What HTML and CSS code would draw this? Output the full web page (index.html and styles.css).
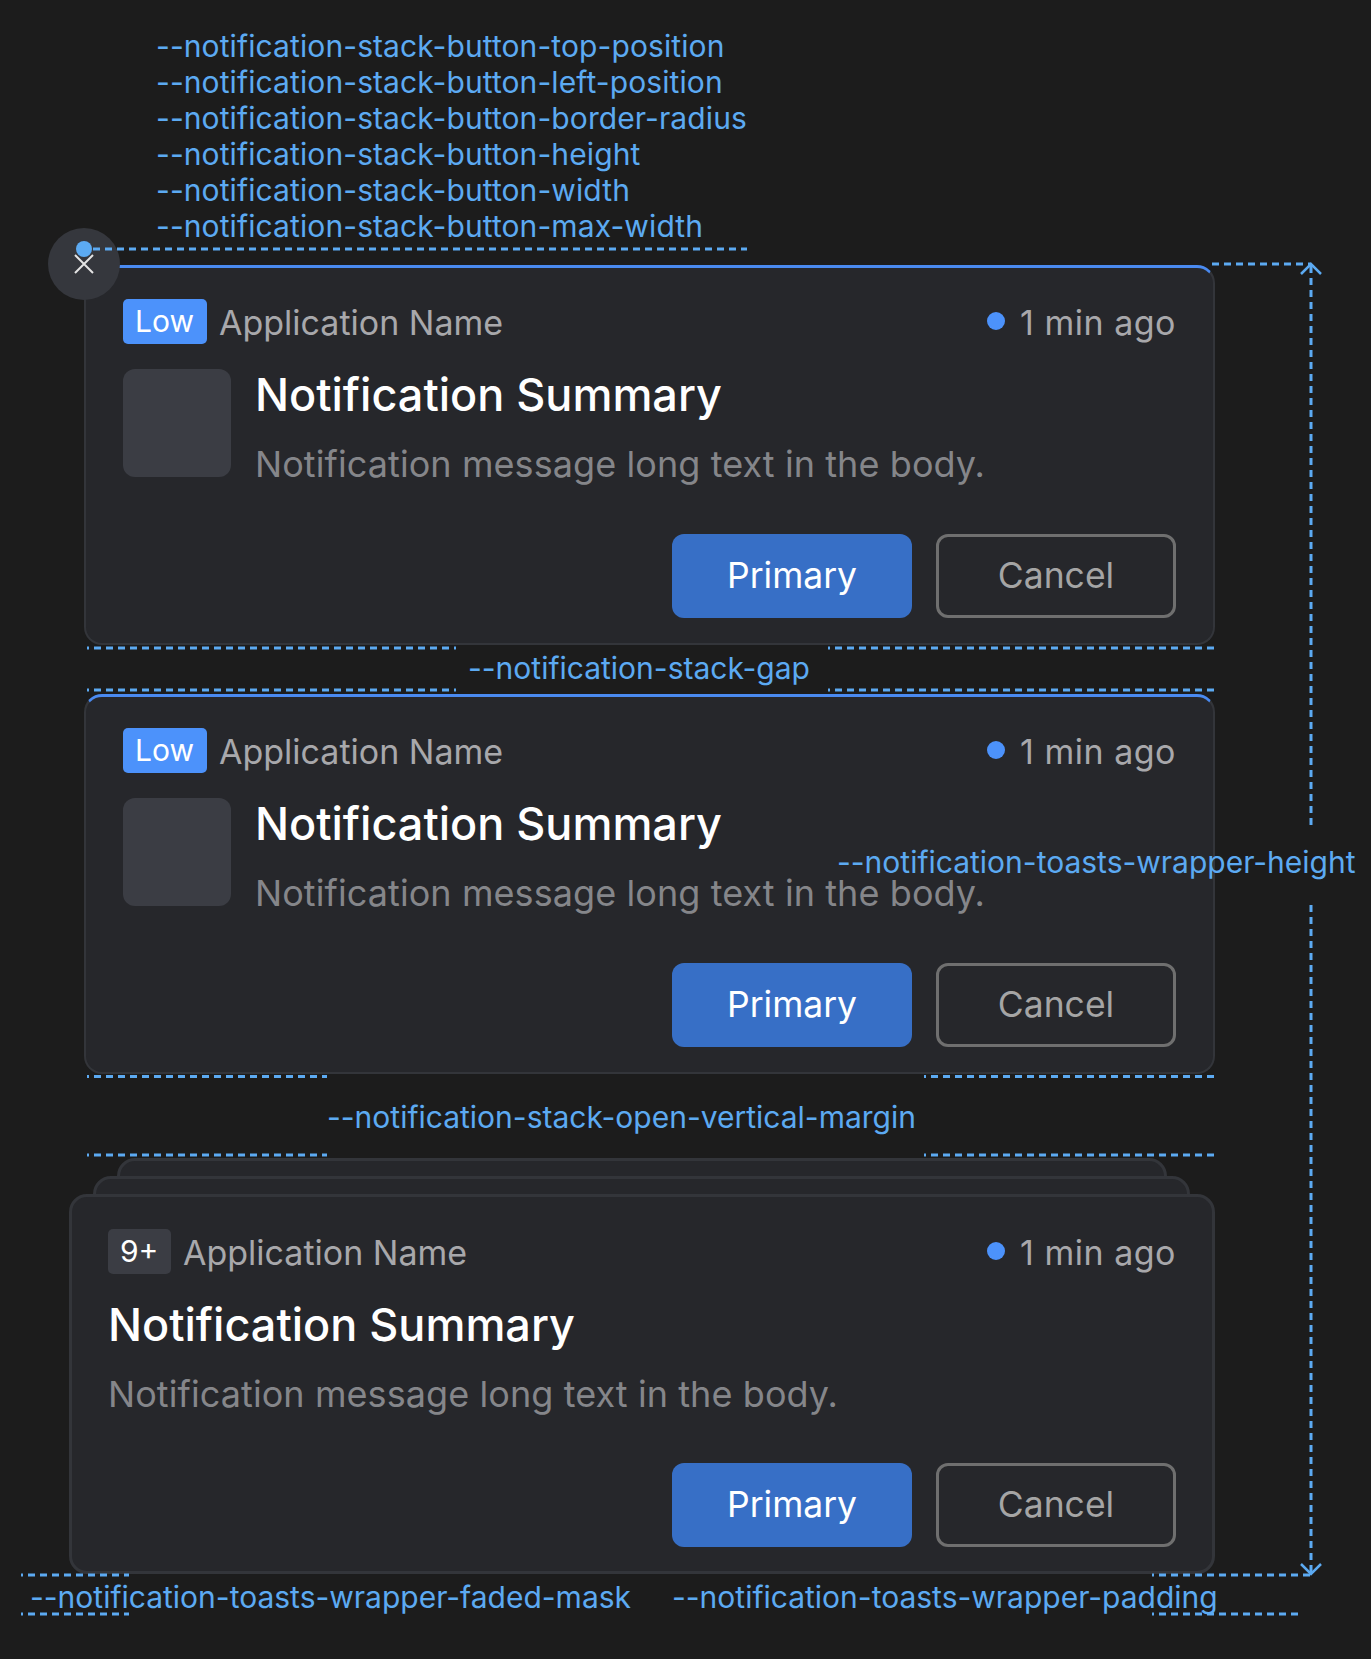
FILE: index.html
```html
<!DOCTYPE html>
<html>
<head>
    <title>Notification stack tokens</title>
    <link rel="stylesheet" href="styles.css">
</head>
<body>
    <div class="canvas">
        <!-- Tokens of the close button -->
        <div class="var-list">
            <div>--notification-stack-button-top-position</div>
            <div>--notification-stack-button-left-position</div>
            <div>--notification-stack-button-border-radius</div>
            <div>--notification-stack-button-height</div>
            <div>--notification-stack-button-width</div>
            <div>--notification-stack-button-max-width</div>
        </div>

        <div class="toasts">
            <!-- Toast 1 -->
            <div class="toast toast-unread">
                <div class="toast-header">
                    <span class="badge badge-low">Low</span>
                    <span class="app-name">Application Name</span>
                    <span class="unread-dot"></span>
                    <span class="time">1 min ago</span>
                </div>
                <div class="toast-body">
                    <div class="toast-icon"></div>
                    <div>
                        <div class="toast-title">Notification Summary</div>
                        <div class="toast-message">Notification message long text in the body.</div>
                    </div>
                </div>
                <div class="toast-actions">
                    <button class="btn btn-primary">Primary</button>
                    <button class="btn btn-cancel">Cancel</button>
                </div>
            </div>

            <!-- Toast 2 -->
            <div class="toast toast-unread">
                <div class="toast-header">
                    <span class="badge badge-low">Low</span>
                    <span class="app-name">Application Name</span>
                    <span class="unread-dot"></span>
                    <span class="time">1 min ago</span>
                </div>
                <div class="toast-body">
                    <div class="toast-icon"></div>
                    <div>
                        <div class="toast-title">Notification Summary</div>
                        <div class="toast-message">Notification message long text in the body.</div>
                    </div>
                </div>
                <div class="toast-actions">
                    <button class="btn btn-primary">Primary</button>
                    <button class="btn btn-cancel">Cancel</button>
                </div>
            </div>

            <!-- Collapsed stack -->
            <div class="stack">
                <div class="stack-layer stack-layer-back"></div>
                <div class="stack-layer stack-layer-mid"></div>
                <div class="toast toast-front">
                    <div class="toast-header">
                        <span class="badge badge-count">9+</span>
                        <span class="app-name">Application Name</span>
                        <span class="unread-dot"></span>
                        <span class="time">1 min ago</span>
                    </div>
                    <div class="toast-body">
                        <div>
                            <div class="toast-title">Notification Summary</div>
                            <div class="toast-message">Notification message long text in the body.</div>
                        </div>
                    </div>
                    <div class="toast-actions">
                        <button class="btn btn-primary">Primary</button>
                        <button class="btn btn-cancel">Cancel</button>
                    </div>
                </div>
            </div>
        </div>

        <!-- Close button -->
        <div class="close-button">
            <svg width="22" height="22" viewBox="0 0 22 22">
                <path d="M2 2 L20 20 M20 2 L2 20" stroke="#e4e4e4" stroke-width="2" fill="none"/>
            </svg>
        </div>

        <!-- Measure lines -->
        <svg class="measures" width="1371" height="1659" viewBox="0 0 1371 1659">
            <circle cx="84" cy="249" r="8" class="measure-dot"/>
            <path class="measure-line" d="M93 249 H747"/>
            <path class="measure-line measure-offset" d="M87 648 H456 M828 648 H1215 M87 690 H456 M828 690 H1215"/>
            <path class="measure-line measure-offset" d="M87 1076.5 H327 M924 1076.5 H1215 M87 1155 H327 M924 1155 H1215"/>
            <path class="measure-line" d="M1212 264 H1311 M1311 266 V825 M1311 905 V1572"/>
            <path class="measure-solid" d="M1301 274 L1311 264 L1321 274 M1301 1564 L1311 1574 L1321 1564"/>
            <path class="measure-line measure-offset" d="M21 1575 H129 M21 1614 H129 M1152 1575 H1311 M1152 1614 H1299"/>
        </svg>

        <div class="label label-gap">--notification-stack-gap</div>
        <div class="label label-margin">--notification-stack-open-vertical-margin</div>
        <div class="label label-height">--notification-toasts-wrapper-height</div>
        <div class="label label-mask">--notification-toasts-wrapper-faded-mask</div>
        <div class="label label-padding">--notification-toasts-wrapper-padding</div>
    </div>
</body>
</html>
```

FILE: styles.css
```css
body {
    margin: 0;
    background-color: #1c1c1c;
    font-family: Inter, "Liberation Sans", sans-serif;
}
.canvas {
    position: relative;
    height: 1659px;
    overflow: hidden;
}
.var-list {
    height: 237px;
    padding: 28px 0 0 156px;
    font-size: 30px;
    line-height: 36px;
    letter-spacing: 0.1px;
    color: #5caaf2;
}
.var-list div {
    height: 36px;
}
.toasts {
    display: flex;
    flex-direction: column;
    gap: 49px;
    width: 1131px;
    margin-left: 84px;
}
.toast {
    position: relative;
    box-sizing: border-box;
    height: 380px;
    padding: 31px 37px 24px 37px;
    background-color: #26272b;
    border: 2px solid #33353a;
    border-radius: 18px;
    display: flex;
    flex-direction: column;
}
.toast-unread {
    border-top: 3px solid #4a8af0;
}
.toast-header {
    display: flex;
    align-items: center;
    height: 45px;
}
.badge {
    height: 45px;
    line-height: 45px;
    padding: 0 12px;
    border-radius: 5px;
    font-size: 30px;
    color: #fff;
    box-sizing: border-box;
}
.badge-low {
    background-color: #4c92fb;
    width: 84px;
}
.badge-count {
    background-color: #3b3d44;
    width: 63px;
}
.app-name {
    margin: 2px 0 0 12px;
    flex: 1;
    font-size: 34px;
    color: #a8a8ab;
}
.unread-dot {
    width: 18px;
    height: 18px;
    border-radius: 50%;
    background-color: #4c92fb;
    margin: -2px 15px 0 0;
}
.time {
    margin-top: 2px;
    font-size: 34px;
    letter-spacing: 0.5px;
    color: #a8a8ab;
}
.toast-body {
    display: flex;
    gap: 24px;
    height: 165px;
    margin-top: 25px;
}
.toast-icon {
    width: 108px;
    height: 108px;
    border-radius: 12px;
    background-color: #3b3d44;
}
.toast-title {
    font-size: 45px;
    font-weight: 500;
    line-height: 52px;
    color: #fff;
}
.toast-message {
    margin-top: 20px;
    font-size: 36px;
    letter-spacing: 0.08px;
    line-height: 46px;
    color: #85868a;
}
.toast-actions {
    display: flex;
    justify-content: flex-end;
    gap: 24px;
}
.btn {
    width: 240px;
    height: 84px;
    padding-bottom: 2px;
    border-radius: 12px;
    font-family: inherit;
    font-size: 35.5px;
    box-sizing: border-box;
}
.btn-primary {
    background-color: #376fc6;
    border: none;
    color: #fff;
}
.btn-cancel {
    background: none;
    border: 3px solid #6f6f6f;
    color: #a5a5a5;
}
.stack {
    position: relative;
    margin-top: 71px;
}
.stack-layer {
    position: absolute;
    box-sizing: border-box;
    height: 60px;
    background-color: #26272b;
    border: 3px solid #33353a;
    border-radius: 18px 18px 0 0;
}
.stack-layer-back {
    top: -36px;
    left: 33px;
    right: 48px;
}
.stack-layer-mid {
    top: -18px;
    left: 9px;
    right: 25px;
}
.toast-front {
    height: 380px;
    margin-left: -15px;
    padding: 32px 36px 24px 36px;
    border-width: 3px;
}
.toast-front .toast-body {
    height: 164px;
}
.close-button {
    position: absolute;
    left: 48px;
    top: 228px;
    width: 72px;
    height: 72px;
    border-radius: 50%;
    background-color: #35373d;
    display: flex;
    align-items: center;
    justify-content: center;
}
.measures {
    position: absolute;
    left: 0;
    top: 0;
}
.measure-dot {
    fill: #5caaf2;
}
.measure-line {
    fill: none;
    stroke: #5caaf2;
    stroke-width: 3;
    stroke-dasharray: 7 5;
}
.measure-offset {
    stroke-dashoffset: 5;
}
.measure-solid {
    fill: none;
    stroke: #5caaf2;
    stroke-width: 2.5;
}
.label {
    position: absolute;
    font-size: 30px;
    line-height: 36px;
    color: #5caaf2;
    white-space: nowrap;
}
.label-gap {
    left: 468px;
    top: 650px;
}
.label-margin {
    left: 327px;
    top: 1099px;
}
.label-height {
    left: 837px;
    top: 844px;
}
.label-mask {
    left: 30px;
    top: 1579px;
}
.label-padding {
    left: 672px;
    top: 1579px;
}
```
